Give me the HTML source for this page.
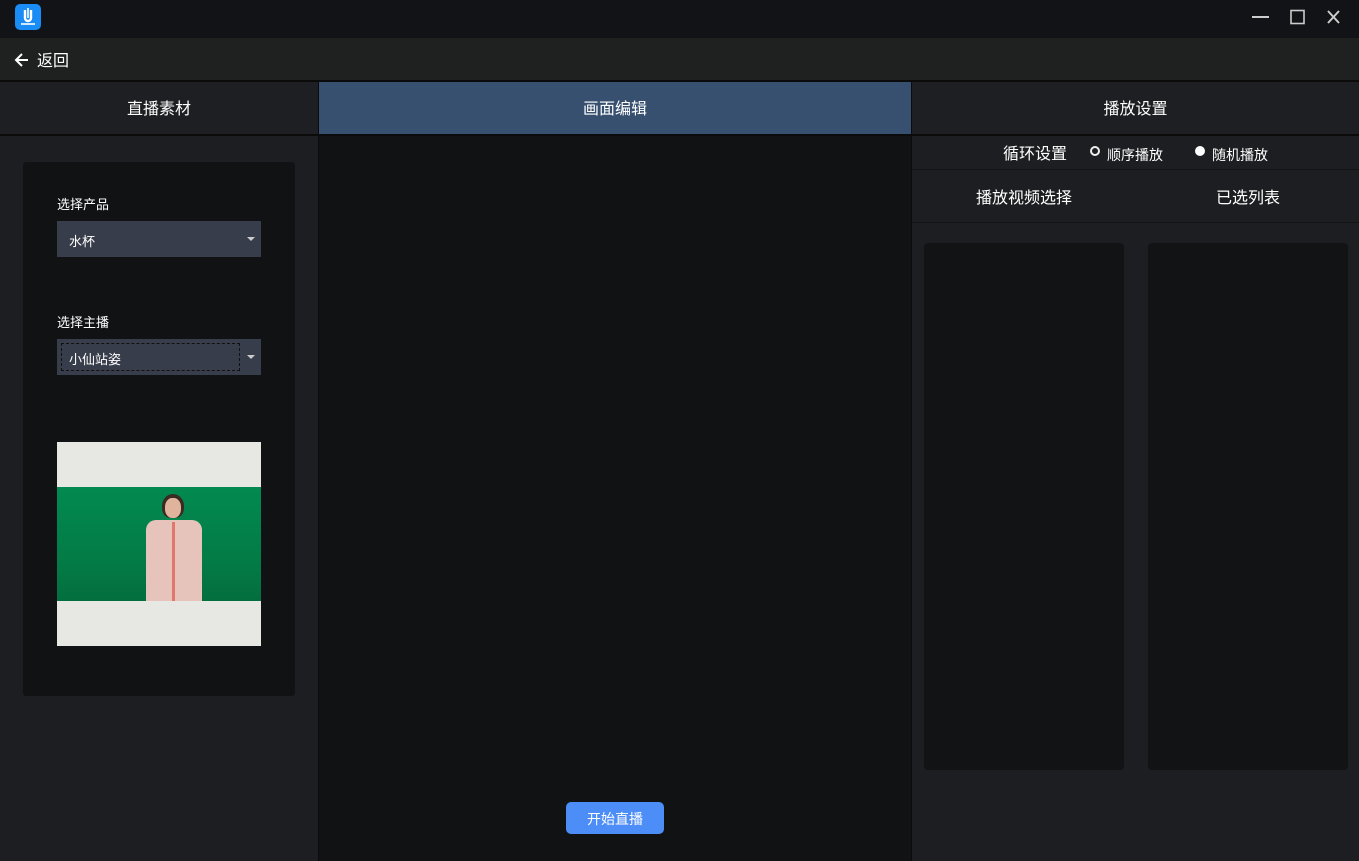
<!DOCTYPE html>
<html><head><meta charset="utf-8"><style>
*{margin:0;padding:0;box-sizing:border-box}
body{width:1359px;height:861px;background:#111214;font-family:"Liberation Sans","Noto Sans CJK SC",sans-serif;color:#fff;position:relative;overflow:hidden}
.a{position:absolute;line-height:1}
.c{display:flex;align-items:center;justify-content:center;padding-top:3px}
</style></head><body>
<div class="a" style="left:0;top:0;width:1359px;height:38px;background:#121316"></div>
<div class="a c" style="left:15px;top:4px;width:26px;height:26px;background:#1a8cf5;border-radius:5px;padding:0">
<svg width="18" height="20" viewBox="0 0 18 20"><path d="M6 3v8a3 3 0 0 0 6 0V3" stroke="#fff" stroke-width="2.4" fill="none"/><path d="M9 1v10" stroke="#fff" stroke-width="1.6"/><rect x="2" y="16" width="14" height="2" fill="#fff" opacity=".8"/></svg></div>
<svg class="a" style="left:1250px;top:8px" width="100" height="20"><line x1="2" y1="9" x2="19" y2="9" stroke="#ccc" stroke-width="2"/><rect x="41" y="2.5" width="13" height="13" stroke="#ccc" stroke-width="1.6" fill="none"/><path d="M78 3l11 12M89 3l-11 12" stroke="#ccc" stroke-width="2"/></svg>
<div class="a" style="left:0;top:38px;width:1359px;height:42px;background:#1f2020"></div>
<svg class="a" style="left:14px;top:52px" width="16" height="16"><path d="M14 8H2M8 2L2 8l6 6" stroke="#fff" stroke-width="2" fill="none"/></svg>
<div class="a" style="left:37px;top:54px;font-size:16px">返回</div>
<div class="a" style="left:0;top:80px;width:1359px;height:2px;background:#0b0b0c"></div>
<div class="a c" style="left:0;top:82px;width:318px;height:52px;background:#1e1f22;font-size:16px">直播素材</div>
<div class="a c" style="left:319px;top:82px;width:592px;height:52px;background:#37506f;font-size:16px">画面编辑</div>
<div class="a c" style="left:912px;top:82px;width:447px;height:52px;background:#1e1f22;font-size:16px">播放设置</div>
<div class="a" style="left:0;top:134px;width:1359px;height:2px;background:#0b0b0c"></div>
<div class="a" style="left:318px;top:82px;width:1px;height:779px;background:#0b0b0c"></div>
<div class="a" style="left:911px;top:82px;width:1px;height:779px;background:#0b0b0c"></div>
<div class="a" style="left:0;top:136px;width:318px;height:725px;background:#1d1e21"></div>
<div class="a" style="left:23px;top:162px;width:272px;height:534px;background:#111214;border-radius:3px"></div>
<div class="a" style="left:57px;top:198px;font-size:13px">选择产品</div>
<div class="a" style="left:57px;top:221px;width:204px;height:36px;background:#373d4a"></div>
<div class="a" style="left:69px;top:235px;font-size:13px">水杯</div>
<div class="a" style="left:247px;top:237px;border:4px solid transparent;border-top:4px solid #ccc;border-bottom:0"></div>
<div class="a" style="left:57px;top:316px;font-size:13px">选择主播</div>
<div class="a" style="left:57px;top:339px;width:204px;height:36px;background:#373d4a"></div>
<div class="a" style="left:61px;top:343px;width:179px;height:28px;border:1px dashed #111"></div>
<div class="a" style="left:69px;top:353px;font-size:13px">小仙站姿</div>
<div class="a" style="left:247px;top:355px;border:4px solid transparent;border-top:4px solid #ccc;border-bottom:0"></div>
<div class="a" style="left:57px;top:442px;width:204px;height:204px;background:#e7e8e4"></div>
<div class="a" style="left:57px;top:487px;width:204px;height:114px;background:linear-gradient(180deg,#028a50,#037a45 70%,#036e3e)"></div>
<div class="a" style="left:162px;top:494px;width:22px;height:24px;background:#3a2a22;border-radius:50% 50% 40% 40%"></div>
<div class="a" style="left:165px;top:498px;width:16px;height:20px;background:#e0b49c;border-radius:45%"></div>
<div class="a" style="left:146px;top:520px;width:56px;height:81px;background:#e6c4bc;border-radius:10px 10px 0 0"></div>
<div class="a" style="left:172px;top:522px;width:3px;height:79px;background:#e0776a"></div>
<div class="a" style="left:319px;top:136px;width:592px;height:725px;background:#111214"></div>
<div class="a c" style="left:566px;top:802px;width:98px;height:32px;background:#4d8df7;border-radius:5px;font-size:14px;padding-top:2px">开始直播</div>
<div class="a" style="left:912px;top:136px;width:447px;height:725px;background:#1d1e21"></div>
<div class="a" style="left:1003px;top:147px;font-size:16px">循环设置</div>
<div class="a" style="left:1090px;top:146px;width:10px;height:10px;border-radius:50%;border:2.5px solid #eee;background:#1d1e21"></div>
<div class="a" style="left:1107px;top:148px;font-size:14px">顺序播放</div>
<div class="a" style="left:1195px;top:146px;width:10px;height:10px;border-radius:50%;background:#fff"></div>
<div class="a" style="left:1212px;top:148px;font-size:14px">随机播放</div>
<div class="a" style="left:912px;top:169px;width:447px;height:1px;background:#141416"></div>
<div class="a" style="left:976px;top:191px;font-size:16px">播放视频选择</div>
<div class="a" style="left:1216px;top:191px;font-size:16px">已选列表</div>
<div class="a" style="left:912px;top:222px;width:447px;height:1px;background:#141416"></div>
<div class="a" style="left:924px;top:243px;width:200px;height:527px;background:#121315;border-radius:4px"></div>
<div class="a" style="left:1148px;top:243px;width:200px;height:527px;background:#121315;border-radius:4px"></div>
</body></html>
